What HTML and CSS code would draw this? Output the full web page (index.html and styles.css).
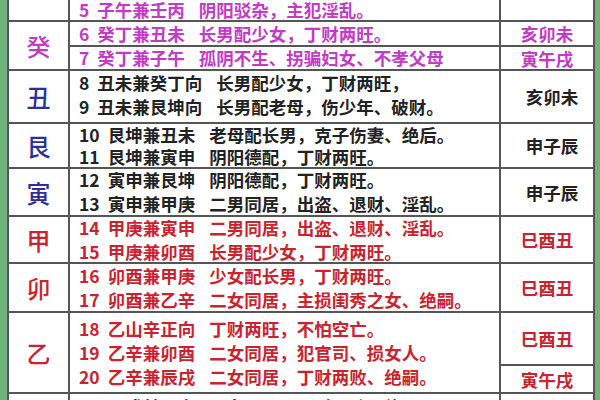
FILE: index.html
```html
<!DOCTYPE html>
<html lang="zh">
<head>
<meta charset="utf-8">
<link rel="stylesheet" href="styles.css">
</head>
<body>
<div class="tbl">
  <div class="c l"></div>
  <div class="c m pink first"><div class="ln"><span class="n">5</span><span class="a">子午兼壬丙</span>阴阳驳杂，主犯淫乱。</div></div>
  <div class="c r"></div>

  <div class="c l big pink span2">癸</div>
  <div class="c m pink"><div class="ln"><span class="n">6</span><span class="a">癸丁兼丑未</span>长男配少女，丁财两旺。</div></div>
  <div class="c r pink">亥卯未</div>
  <div class="c m pink"><div class="ln"><span class="n">7</span><span class="a">癸丁兼子午</span>孤阴不生、拐骗妇女、不孝父母</div></div>
  <div class="c r pink">寅午戌</div>

  <div class="c l big blue">丑</div>
  <div class="c m g89"><div class="ln"><span class="n">8</span><span class="a">丑未兼癸丁向</span>长男配少女，丁财两旺，</div><div class="ln"><span class="n">9</span><span class="a">丑未兼艮坤向</span>长男配老母，伤少年、破财。</div></div>
  <div class="c r blk">亥卯未</div>

  <div class="c l big blue">艮</div>
  <div class="c m g1011"><div class="ln"><span class="n">10</span><span class="a">艮坤兼丑未</span>老母配长男，克子伤妻、绝后。</div><div class="ln"><span class="n">11</span><span class="a">艮坤兼寅申</span>阴阳德配，丁财两旺。</div></div>
  <div class="c r blk">申子辰</div>

  <div class="c l big blue">寅</div>
  <div class="c m"><div class="ln"><span class="n">12</span><span class="a">寅申兼艮坤</span>阴阳德配，丁财两旺。</div><div class="ln"><span class="n">13</span><span class="a">寅申兼甲庚</span>二男同居，出盗、退财、淫乱。</div></div>
  <div class="c r blk">申子辰</div>

  <div class="c l big red">甲</div>
  <div class="c m red"><div class="ln"><span class="n">14</span><span class="a">甲庚兼寅申</span>二男同居，出盗、退财、淫乱。</div><div class="ln"><span class="n">15</span><span class="a">甲庚兼卯酉</span>长男配少女，丁财两旺。</div></div>
  <div class="c r red">巳酉丑</div>

  <div class="c l big red">卯</div>
  <div class="c m red"><div class="ln"><span class="n">16</span><span class="a">卯酉兼甲庚</span>少女配长男，丁财两旺。</div><div class="ln"><span class="n">17</span><span class="a">卯酉兼乙辛</span>二女同居，主损闺秀之女、绝嗣。</div></div>
  <div class="c r red">巳酉丑</div>

  <div class="c l big red span2">乙</div>
  <div class="c m red span2"><div class="ln"><span class="n">18</span><span class="a">乙山辛正向</span>丁财两旺，不怕空亡。</div><div class="ln"><span class="n">19</span><span class="a">乙辛兼卯酉</span>二女同居，犯官司、损女人。</div><div class="ln"><span class="n">20</span><span class="a">乙辛兼辰戌</span>二女同居，丁财两败、绝嗣。</div></div>
  <div class="c r red">巳酉丑</div>
  <div class="c r red">寅午戌</div>

  <div class="c l"></div>
  <div class="c m top"><div class="ln"><span class="n">21</span><span class="a">辰戌兼乙辛</span>二女同居，丁财两败、绝嗣。</div></div>
  <div class="c r"></div>
</div>
</body>
</html>
```
FILE: styles.css
```css
html, body {
  margin: 0;
  padding: 0;
}
body {
  width: 600px;
  height: 400px;
  overflow: hidden;
  background: #6fb37c;
  font-family: "Noto Sans CJK SC", sans-serif;
  font-weight: 700;
  font-size: 17.5px;
  color: #222;
}
.tbl {
  margin-left: 7px;
  width: 588px;
  box-sizing: border-box;
  display: grid;
  grid-template-columns: 61px 431px 94px;
  grid-template-rows: 22px 25px 24px 53px 45px 48px 47px 49px 53px 28px 40px;
  background: #fff;
  border-left: 2px solid #555;
}
.c {
  box-sizing: border-box;
  border-right: 2px solid #555;
  border-bottom: 2px solid #555;
  display: flex;
  flex-direction: column;
  justify-content: center;
}
.span2 {
  grid-row: span 2;
}
.l {
  align-items: center;
}
.big {
  font-size: 24px;
  font-weight: 500;
}
.m {
  padding-left: 9px;
}
.ln {
  line-height: 24px;
  white-space: nowrap;
}
.first .ln {
  line-height: 20px;
}
.n {
  margin-right: 8px;
}
.a {
  margin-right: 14px;
}
.r {
  align-items: center;
  text-align: center;
}
.r.blk {
  padding-left: 10px;
}
.g89 {
  padding-bottom: 4px;
}
.g1011 .ln {
  line-height: 22px;
}
.top {
  justify-content: flex-start;
  padding-top: 1px;
  overflow: hidden;
}
.pink { color: #c23ac6; }
.blue { color: #2b2f98; }
.red { color: #c8232e; }
```
